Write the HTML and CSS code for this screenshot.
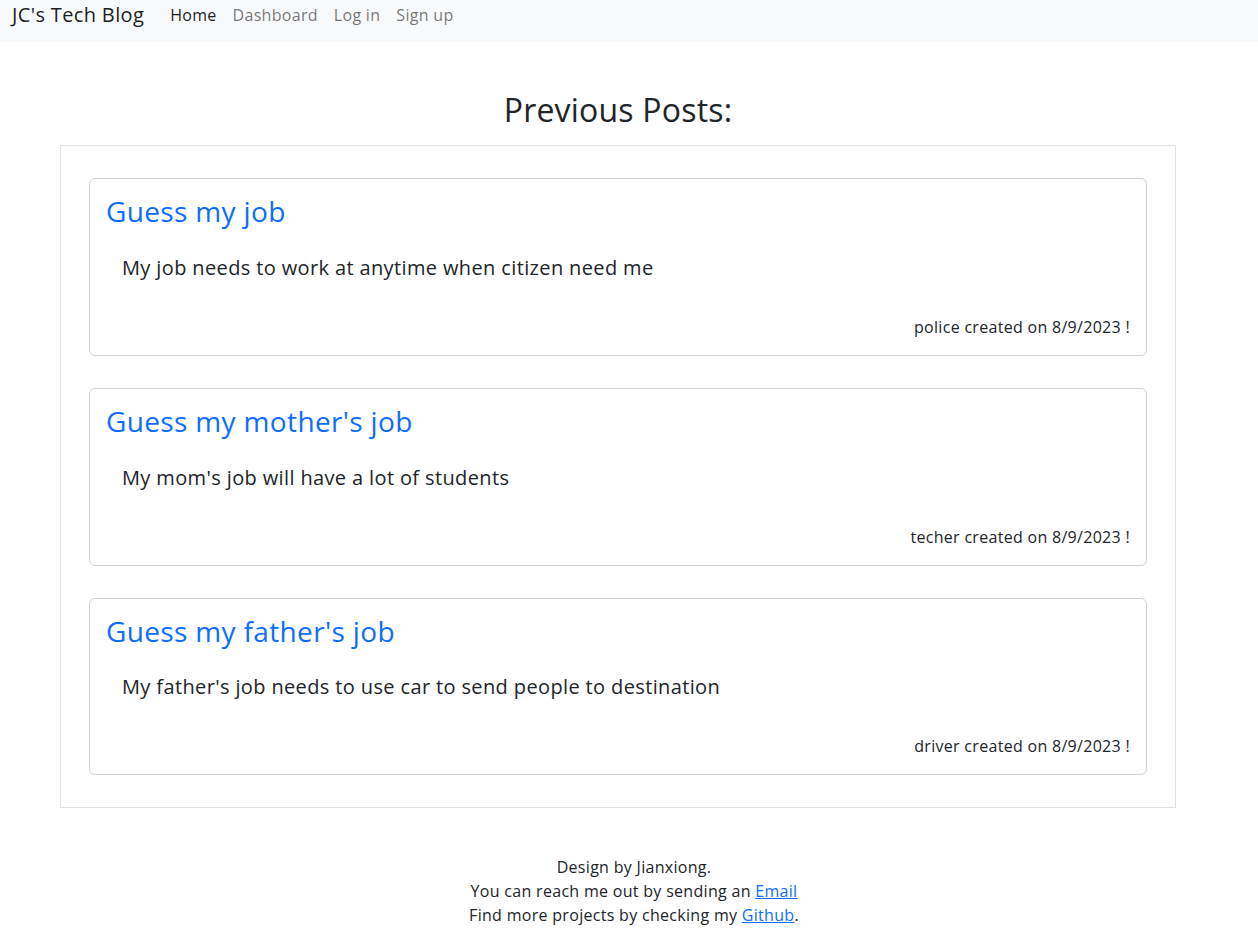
FILE: index.html
```html
<!DOCTYPE html>
<html lang="en">
<head>
<meta charset="utf-8">
<title>JC's Tech Blog</title>
<link rel="stylesheet" href="styles.css">
</head>
<body>
<nav class="navbar">
  <a class="brand" href="#">JC's Tech Blog</a>
  <ul class="nav">
    <li><a class="nav-link active" href="#">Home</a></li>
    <li><a class="nav-link" href="#">Dashboard</a></li>
    <li><a class="nav-link" href="#">Log in</a></li>
    <li><a class="nav-link" href="#">Sign up</a></li>
  </ul>
</nav>
<main class="main">
  <h2 class="page-title">Previous Posts:</h2>
  <section class="posts">
    <article class="card">
      <h3 class="card-title">Guess my job</h3>
      <p class="card-text">My job needs to work at anytime when citizen need me</p>
      <p class="card-meta">police created on 8/9/2023 !</p>
    </article>
    <article class="card">
      <h3 class="card-title">Guess my mother's job</h3>
      <p class="card-text">My mom's job will have a lot of students</p>
      <p class="card-meta">techer created on 8/9/2023 !</p>
    </article>
    <article class="card">
      <h3 class="card-title">Guess my father's job</h3>
      <p class="card-text">My father's job needs to use car to send people to destination</p>
      <p class="card-meta">driver created on 8/9/2023 !</p>
    </article>
  </section>
</main>
<footer class="footer">
  <p>Design by Jianxiong.</p>
  <p>You can reach me out by sending an <a href="#">Email</a></p>
  <p>Find more projects by checking my <a href="#">Github</a>.</p>
</footer>
</body>
</html>
```

FILE: styles.css
```css
* { box-sizing: border-box; }
html, body { margin: 0; padding: 0; }
body {
  font-family: "Open Sans", "Noto Sans", sans-serif;
  font-size: 16px;
  line-height: 1.5;
  color: #212529;
  background: #fff;
}
.navbar {
  height: 42px;
  background: #f8f9fa;
  display: flex;
  align-items: flex-start;
  padding: 0 12px;
}
.brand {
  font-size: 20px;
  line-height: 30px;
  color: rgba(0,0,0,0.9);
  text-decoration: none;
  margin-right: 18px;
  letter-spacing: 0.35px;
}
.nav {
  list-style: none;
  margin: 0;
  padding: 3px 0 0;
  display: flex;
}
.nav-link {
  display: block;
  padding: 0 8px;
  font-size: 16px;
  line-height: 24px;
  color: rgba(0,0,0,0.55);
  text-decoration: none;
  letter-spacing: 0.3px;
}
.nav-link.active { color: rgba(0,0,0,0.9); }
.main {
  width: 1116px;
  margin-left: 60px;
}
.page-title {
  margin: 49px 0 0;
  text-align: center;
  font-size: 32px;
  font-weight: 400;
  line-height: 1.2;
  height: 54.4px;
  letter-spacing: 0.2px;
}
.posts {
  border: 1px solid #dee2e6;
  padding: 32px 28px;
  display: flex;
  flex-direction: column;
  gap: 32px;
}
.card {
  border: 1px solid rgba(0,0,0,0.175);
  border-radius: 6px;
  padding: 16px;
}
.card-title {
  margin: 0 0 8px;
  font-size: 28px;
  font-weight: 400;
  line-height: 1.2;
  color: #0d6efd;
  letter-spacing: 0.35px;
}
.card-text {
  margin: 0 0 16px;
  padding: 16px;
  font-size: 20px;
  letter-spacing: 0.37px;
}
.card-meta {
  margin: 0;
  text-align: right;
  font-size: 16px;
  letter-spacing: 0.3px;
}
.footer {
  margin-top: 47px;
  padding-left: 10px;
  text-align: center;
  letter-spacing: 0.3px;
}
.footer p { margin: 0; }
.footer a { color: #0d6efd; }
```
